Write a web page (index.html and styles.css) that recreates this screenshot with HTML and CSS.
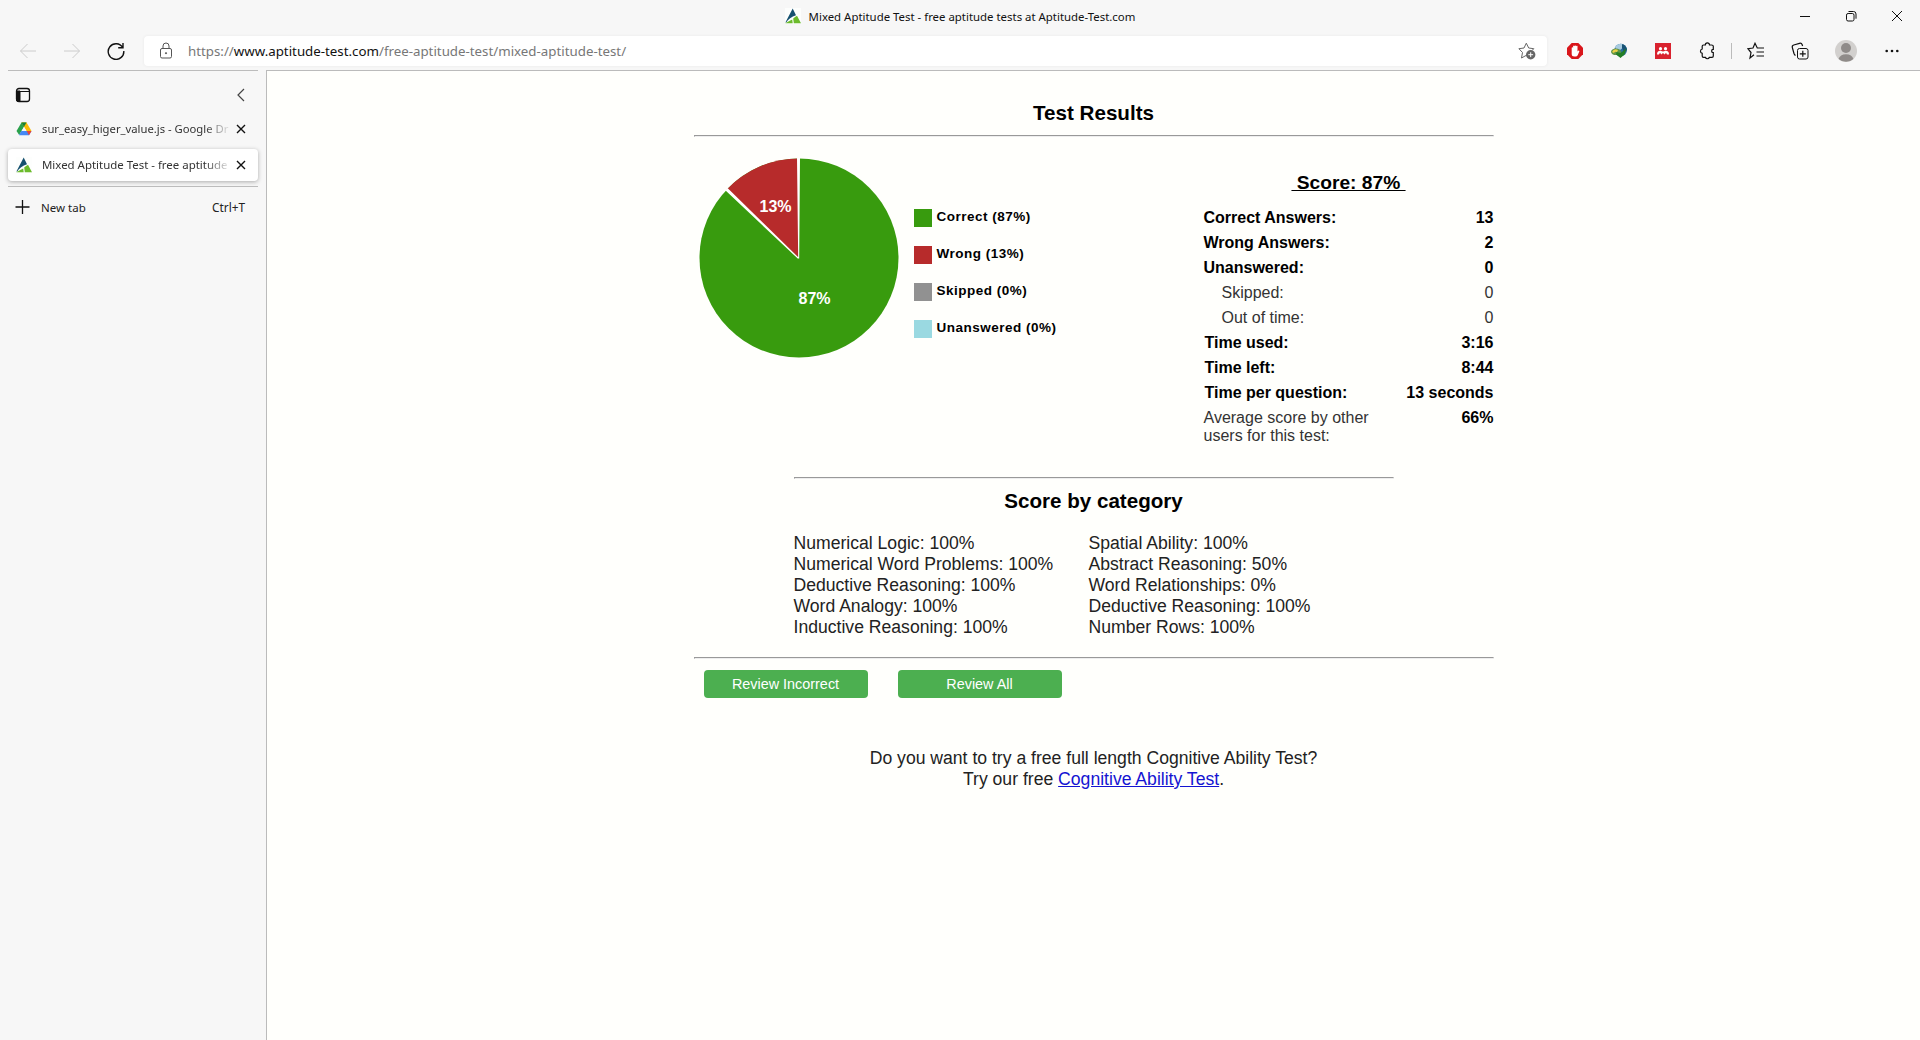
FILE: index.html
```html
<!DOCTYPE html>
<html lang="en">
<head>
<meta charset="utf-8">
<title>Mixed Aptitude Test - free aptitude tests at Aptitude-Test.com</title>
<link rel="stylesheet" href="styles.css">
</head>
<body>
<svg class="defs" width="0" height="0">
  <symbol id="logo" viewBox="0 0 16 16">
    <rect width="16" height="16" fill="#fdfefd"/>
    <path d="M7.7 0.6 11 7.2C6.6 8.6 3 11.4 1.2 14.4L0.4 14.6Z" fill="#15506f"/>
    <path d="M12 7.8 16 15.3H8.8L8.2 10.6C9.4 9.3 10.6 8.4 12 7.8ZM7.2 11.6 7.7 15.3H.3C2.6 14 5 12.8 7.2 11.6Z" fill="#6cbb2c"/>
  </symbol>
</svg>
<div class="browser">
  <header class="titlebar">
    <div class="title"><svg class="i16 solid"><use href="#logo"/></svg><span>Mixed Aptitude Test - free aptitude tests at Aptitude-Test.com</span></div>
    <div class="window-buttons">
      <svg viewBox="0 0 12 12"><path d="M1 6.5H11"/></svg>
      <svg viewBox="0 0 12 12"><rect x="1.5" y="3.5" width="7.5" height="7.5" rx="1.6"/><path d="M3.5 1.5H8.5Q11 1.5 11 4V8.7"/></svg>
      <svg viewBox="0 0 12 12"><path d="M1 1 11 11M11 1 1 11"/></svg>
    </div>
  </header>
  <nav class="toolbar">
    <div class="cell off"><svg class="i18" viewBox="0 0 18 18"><path d="M17 9H1.5M8.5 2 1.5 9l7 7"/></svg></div>
    <div class="cell off"><svg class="i18" viewBox="0 0 18 18"><path d="M1 9H16.5M9.500 2l7 7-7 7"/></svg></div>
    <div class="cell"><svg class="i18" viewBox="0 0 18 18"><path d="M15.700 5.500A7.800 7.800 0 1 0 16.800 9M16 1V5.800H11.200" stroke-width="1.4"/></svg></div>
    <div class="address">
      <svg class="lock" viewBox="0 0 14 18"><rect x="1.500" y="6.500" width="11" height="9.500" rx="1.500"/><path d="M4 6.500V4a3 3 0 0 1 6 0V6.500"/><circle cx="7" cy="11.200" r=".6" fill="#555"/></svg>
      <span class="url">https://<b>www.aptitude-test.com</b>/free-aptitude-test/mixed-aptitude-test/</span>
      <svg class="addfav" viewBox="0 0 18 18"><path d="M11 16.300 8.500 13.200 3.500 16 4.500 10.500.900 6.700 6 6 8.300 1.200 10.700 6 15.800 6.700 14.500 8"/><circle cx="12.700" cy="12.700" r="4.700" fill="#666" stroke="none"/><path d="M12.700 10.300v4.800M10.300 12.700h4.800" stroke="#fff"/></svg>
    </div>
    <div class="cell"><svg class="i16 solid" viewBox="0 0 16 16"><path d="M4.700 0h6.600L16 4.700v6.600L11.300 16H4.700L0 11.300V4.700Z" fill="#d9161b"/><path d="M4.700 9V5a.7.7 0 0 1 1.400 0V3.500a.7.7 0 0 1 1.400-.3.800.8 0 0 1 1.600 0 .7.7 0 0 1 1.400.5V8.500l.7-.8a.7.7 0 0 1 1.100.8L10.700 12.300Q10 13.500 8.600 13.500H7.300Q4.700 13.500 4.700 11Z" fill="#fff"/></svg></div>
    <div class="cell"><svg class="i16 solid" viewBox="0 0 16 16"><circle cx="9.800" cy="7" r="6.200" fill="#2d6f9f"/><path d="M4 4Q7 0 12 1L13 4 9 7 5 6Z" fill="#a8cbe0"/><path d="M11 1Q15 2 16 7L13 9 11 5Z" fill="#195374"/><ellipse cx="5" cy="8.800" rx="5" ry="3.300" fill="#629547"/><path d="M1 9Q3 5 7 7L6 9Q4 8 3 10Z" fill="#ecd246"/><path d="M5.500 9 9.500 10 15.500 5.500 13.500 11.500 9.500 15 5 11.500Z" fill="#237f25"/></svg></div>
    <div class="cell"><svg class="i16 solid" viewBox="0 0 16 16"><rect width="16" height="16" fill="#d9222e"/><circle cx="5.500" cy="5.700" r="1.600" fill="#fff"/><circle cx="10.500" cy="5.700" r="1.600" fill="#fff"/><path d="M2 11.500Q2 7.800 5.200 7.800L8 8.500 10.800 7.800Q14 7.800 14 11.500H12L11 9.700 9.700 11.500 8 9.900 6.300 11.500 5 9.700 4 11.500Z" fill="#fff"/></svg></div>
    <div class="cell"><svg class="i18" viewBox="0 0 18 18"><path d="M5.500 3H7.300A2.100 2.100 0 0 1 11.500 3H13.500Q15.300 3 15.300 4.300V7.300A1.700 1.700 0 0 0 15.300 10.700V14Q15.300 15.300 14 15.300H11.400A2.100 2.100 0 0 1 7.400 15.300H5.500Q4.200 15.300 4.200 14V11.300A2.200 2.200 0 0 1 4.200 7V4.300Q4.200 3 5.500 3" stroke-width="1.200"/></svg></div>
    <i class="divider"></i>
    <div class="cell"><svg class="i18" viewBox="0 0 18 18"><path d="M7 12.800 3 16 4 10.500.900 6.700 6 6 8 1.300 10.300 6H17M9.500 10H17M9.500 14H17" stroke-width="1.200"/></svg></div>
    <div class="cell"><svg class="i18" viewBox="0 0 18 18"><rect x="6.500" y="6.500" width="10.500" height="10.500" rx="2"/><path d="M11.800 8.800v6M8.800 11.800h6M4.500 13.500Q3.500 13 3 11.500L1.300 5.500Q.9 3.500 2.700 3L8.500 1.300Q10.500.8 11.200 2.700L11.600 4" stroke-width="1.200"/></svg></div>
    <div class="cell profile"><svg class="solid" width="22" height="22" viewBox="0 0 22 22"><circle cx="11" cy="11" r="11" fill="#d2d0ce"/><circle cx="11" cy="8" r="5" fill="#8f8b89"/><path d="M3.600 19Q5 14.200 11 14.200T18.400 19A11 11 0 0 1 3.600 19Z" fill="#8f8b89"/></svg></div>
    <div class="cell"><svg class="i16 solid" viewBox="0 0 16 16"><g fill="#111"><circle cx="2.700" cy="8" r="1.300"/><circle cx="8" cy="8" r="1.300"/><circle cx="13.300" cy="8" r="1.300"/></g></svg></div>
  </nav>
  <div class="body">
    <aside class="sidebar">
      <div class="sidehead">
        <svg class="i16" viewBox="0 0 16 16"><rect x="1.500" y="1.500" width="13" height="13" rx="2.500" stroke-width="1.300"/><path d="M1.500 4H5V14.500H3Q1.500 14.500 1.500 13Z" fill="#111"/><path d="M2 4.500H14"/></svg>
        <svg class="chev" viewBox="0 0 8 14"><path d="M7 1 1 7l6 6" stroke="#444" stroke-width="1.200"/></svg>
      </div>
      <div class="tab">
        <svg class="i16 solid" viewBox="0 0 16 16"><path d="M5.500 1.500H10.500L8 5.800 3.200 14 .5 10Z" fill="#2aa14c"/><path d="M5.500 1.500H10.500L15.500 10H10.500Z" fill="#fbbc05"/><path d="M5.500 1.500H10.500L8 5.800Z" fill="#168039"/><path d="M5.300 10H15.500L13 14.300H3Z" fill="#4688f4"/><path d="M10.700 10H15.500L13 14.300Z" fill="#ea4335"/><path d="M8 6 10.400 10H5.600Z" fill="#f7f7f7"/></svg>
        <span class="label file">sur_easy_higer_value.js - Google Dr</span>
        <svg class="x" viewBox="0 0 10 10"><path d="M1 1 9 9M9 1 1 9"/></svg>
      </div>
      <div class="tab active">
        <svg class="i16 solid"><use href="#logo"/></svg>
        <span class="label">Mixed Aptitude Test - free aptitude</span>
        <svg class="x" viewBox="0 0 10 10"><path d="M1 1 9 9M9 1 1 9"/></svg>
      </div>
      <div class="newtab">
        <svg class="i16" viewBox="0 0 16 16"><path d="M8.500 1V15M1.500 8H15.500" stroke-width="1.300"/></svg>
        <span class="nt">New tab</span><span class="key">Ctrl+T</span>
      </div>
    </aside>
    <main class="page">
      <div class="results">
        <h3 class="heading">Test Results</h3>
        <hr>
        <section class="summary">
          <svg class="pie solid" width="200" height="200" viewBox="0 0 200 200">
            <circle cx="100" cy="100" r="99.500" fill="#389b0e"/>
            <path d="M100 100 L99.500 .5 A99.500 99.500 0 0 0 27.300 32Z" fill="#b72b2b"/>
            <path d="M99.200 100.500 L98 0H101L100.200 100.500ZM99 100.800 L26.300 32.300 28.500 30 100 100Z" fill="#fff"/>
            <text x="60.500" y="53.500">13%</text><text x="99.500" y="145.500">87%</text>
          </svg>
          <ul class="legend">
            <li><i class="green"></i>Correct (87%)</li>
            <li><i class="red"></i>Wrong (13%)</li>
            <li><i class="gray"></i>Skipped (0%)</li>
            <li><i class="cyan"></i>Unanswered (0%)</li>
          </ul>
          <div class="stats">
            <h4>&nbsp;Score: 87%&nbsp;</h4>
            <div class="row"><span>Correct Answers:</span><span>13</span></div>
            <div class="row"><span>Wrong Answers:</span><span>2</span></div>
            <div class="row"><span>Unanswered:</span><span>0</span></div>
            <div class="row sub"><span>Skipped:</span><span>0</span></div>
            <div class="row sub"><span>Out of time:</span><span>0</span></div>
            <div class="row time"><span>Time used:</span><span>3:16</span></div>
            <div class="row time"><span>Time left:</span><span>8:44</span></div>
            <div class="row time"><span>Time per question:</span><span>13 seconds</span></div>
            <div class="row avg"><span>Average score by other<br>users for this test:</span><span>66%</span></div>
          </div>
        </section>
        <section class="categories">
          <hr>
          <h3 class="heading">Score by category</h3>
          <div class="columns">
            <div>Numerical Logic: 100%<br>Numerical Word Problems: 100%<br>Deductive Reasoning: 100%<br>Word Analogy: 100%<br>Inductive Reasoning: 100%</div>
            <div>Spatial Ability: 100%<br>Abstract Reasoning: 50%<br>Word Relationships: 0%<br>Deductive Reasoning: 100%<br>Number Rows: 100%</div>
          </div>
        </section>
        <hr>
        <div class="buttons"><button>Review Incorrect</button><button>Review All</button></div>
        <p class="more">Do you want to try a free full length Cognitive Ability Test?<br>Try our free <a href="#">Cognitive Ability Test</a>.</p>
      </div>
    </main>
  </div>
</div>
</body>
</html>
```
FILE: styles.css
```css
* { box-sizing: border-box; }
body { margin: 0; overflow: hidden; background: #f7f7f7; color: #222; font: 12px "Noto Sans", sans-serif; }
.defs { display: none; }
svg { flex: none; display: block; fill: none; stroke: #111; stroke-width: 1; }
svg.solid { stroke: none; }
.i16 { width: 16px; height: 16px; }
.i18 { width: 18px; height: 18px; }
.browser { display: flex; flex-direction: column; height: 1040px; }
.titlebar { display: grid; grid-template-columns: 1fr auto 1fr; align-items: center; height: 32px; }
.title { grid-column: 2; display: flex; align-items: center; gap: 8px; color: #111; font-size: 11.420px; white-space: nowrap; }
.window-buttons { display: flex; justify-content: flex-end; gap: 34px; padding-right: 17px; }
.window-buttons svg { width: 12px; height: 12px; }
.toolbar { display: flex; align-items: center; height: 38px; padding: 0 6px; }
.cell { flex: none; display: flex; align-items: center; justify-content: center; width: 44px; height: 38px; }
.off svg { stroke: #ccc; }
.address { flex: 1; display: flex; align-items: center; height: 30px; margin: 0 6px; padding: 0 11px 0 15px; background: #fff; border-radius: 4px; box-shadow: 0 0 3px #e7e7e7; }
.lock { width: 14px; height: 18px; margin-right: 15px; stroke: #555; }
.url { flex: 1; color: #777; font-size: 13.300px; white-space: nowrap; }
.url b { color: #111; font-weight: 400; }
.addfav { width: 18px; height: 18px; stroke: #666; }
.divider { width: 1px; height: 16px; margin: 0 2px; background: #bbb; }
.profile { margin: 0 2px; }
.body { flex: 1; display: flex; }
.sidebar { width: 266px; padding: 0 8px; }
.sidehead { display: flex; align-items: center; justify-content: space-between; height: 41px; padding: 7px 13px 0 7px; border-top: 1px solid #bcbcbc; }
.chev { width: 8px; height: 14px; }
.tab { display: flex; align-items: center; height: 32px; margin-top: 2px; padding: 0 12px 0 8px; border-radius: 4px; }
.active { margin-top: 4px; background: #fff; box-shadow: 0 1px 4px #aaa; }
.label { flex: 1; min-width: 0; margin: 0 7px 0 10px; color: #333; font-size: 11.450px; line-height: 20px; white-space: nowrap; -webkit-mask-image: linear-gradient(90deg, #000 87%, rgba(0,0,0,.15) 99%); mask-image: linear-gradient(90deg, #000 87%, rgba(0,0,0,.15) 99%); }
.file { font-size: 11.250px; }
.x { width: 10px; height: 10px; stroke-width: 1.400; }
.newtab { display: flex; align-items: center; height: 41px; margin-top: 5px; padding: 0 13px 0 6px; border-top: 1px solid #bcbcbc; font-size: 11.500px; }
.nt { flex: 1; margin-left: 11px; }
.key { font-size: 11.800px; }
.page { flex: 1; background: #fffffc; border-top: 1px solid #bbb; border-left: 1px solid #bbb; color: #222; font: 17.600px/21px "Liberation Sans", Arial, sans-serif; }
.results { width: 800px; margin: 0 auto; padding-top: 30px; }
.heading { margin: 0; color: #000; font-size: 20.600px; line-height: 24px; text-align: center; }
hr { height: 2px; margin: 0; border: 1px solid; border-color: #999 #eee #eee #999; }
.results > .heading { margin-bottom: 10px; }
.summary { display: flex; height: 340px; }
.pie { margin: 21px 0 0 5px; }
.pie text { fill: #fff; font-size: 16px; font-weight: 700; }
.legend { margin: 71px 0 0 15px; padding: 0; list-style: none; color: #000; font-size: 13.500px; font-weight: 700; letter-spacing: .500px; }
.legend li { display: flex; gap: 5px; height: 37px; line-height: 17px; }
.legend i { width: 18px; height: 18px; margin-top: 1px; }
.green { background: #389b0e; }
.red { background: #b72b2b; }
.gray { background: #919191; }
.cyan { background: #9ad9e1; }
.stats { width: 290px; margin-left: auto; padding-top: 33px; color: #000; font-size: 16px; font-weight: 700; }
.stats h4 { margin: 0 0 13px; font-size: 19.200px; line-height: 26px; text-align: center; text-decoration: underline; }
.row { display: flex; justify-content: space-between; height: 25px; line-height: 18px; }
.sub { padding-left: 18px; color: #333; font-weight: 400; }
.time { padding-left: 1px; }
.avg span:first-child { color: #333; font-weight: 400; }
.categories { width: 600px; margin: 0 auto; height: 180px; }
.categories .heading { margin-top: 10px; }
.columns { display: grid; grid-template-columns: 295px 1fr; margin-top: 20px; }
.buttons { display: flex; gap: 30px; padding: 11px 10px 0; }
button { width: 164px; height: 28px; padding: 0; border: 0; border-radius: 4px; background: #4caf50; color: #fff; font: 14.400px "Liberation Sans", Arial, sans-serif; }
.more { margin: 50px 0 0; text-align: center; }
.more a { color: #1414d2; }
```
